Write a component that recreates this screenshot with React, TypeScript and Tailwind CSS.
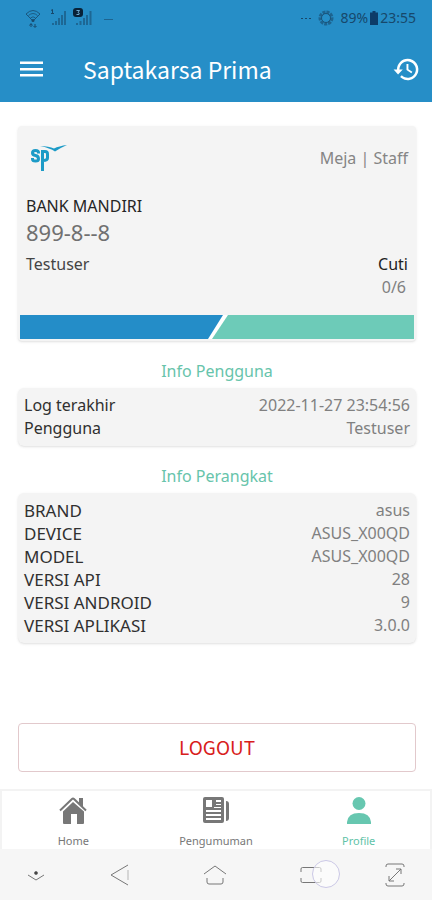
const account = [
  { label: 'Log terakhir', value: '2022-11-27 23:54:56' },
  { label: 'Pengguna', value: 'Testuser' },
];

const device = [
  { label: 'BRAND', value: 'asus' },
  { label: 'DEVICE', value: 'ASUS_X00QD' },
  { label: 'MODEL', value: 'ASUS_X00QD' },
  { label: 'VERSI API', value: '28' },
  { label: 'VERSI ANDROID', value: '9' },
  { label: 'VERSI APLIKASI', value: '3.0.0' },
];

function StatusBar() {
  return (
    <div className="flex h-9 items-center justify-between pl-6 pr-4 text-[#17486b]">
      <div className="flex items-center">
        <svg width="90" height="24" viewBox="0 0 90 24" fill="none" aria-hidden="true">
          <path d="M2 8Q9 1 16 8L9 15Z" stroke="currentColor" opacity=".8" />
          <path d="M4.500 9.500Q9 5.500 13.500 9.500M6.500 12Q9 9.500 11.500 12" stroke="currentColor" opacity=".7" />
          <path d="M7 21v-3M5.500 19.500l1.500-2 1.500 2M11 18v3M9.500 20l1.500 1.500 1.500-1.500" stroke="currentColor" />
          <circle cx="9" cy="14.500" r="1.500" fill="currentColor" />
          <path d="M27 4.500l1.500-1v4M27 7.500h3" stroke="currentColor" />
          <g fill="currentColor" opacity=".55">
            <path d="M28 17h2v2h-2zM31 15h2v4h-2zM34 12h2v7h-2zM37 9h2v10h-2zM40 5h2v14h-2z" />
            <path d="M52 17h2v2h-2zM55.500 15h2v4h-2zM59 12h2v7h-2zM62 9h2v10h-2zM65.500 5h2v14h-2z" />
          </g>
          <rect x="49" y="2" width="10" height="9" rx="3" fill="#082238" />
          <path d="M52.500 4.500h3l-1.500 2q2 .5 1 2h-2.500" stroke="#6ea9cf" />
          <path d="M80 13.500h9" stroke="currentColor" opacity=".6" />
        </svg>
      </div>
      <div className="flex items-center font-['Noto_Sans',sans-serif] text-sm">
        <svg className="mr-1.5" width="34" height="16" viewBox="0 0 34 16" fill="none" aria-hidden="true">
          <path d="M0 8.500h11" stroke="currentColor" strokeDasharray="2 2" />
          <circle cx="25" cy="8" r="6" stroke="currentColor" strokeWidth="3" strokeDasharray="3 1" opacity=".6" />
          <circle cx="25" cy="8" r="4.500" stroke="currentColor" opacity=".8" />
        </svg>
        <span>89%</span>
        <svg className="mx-0.5" width="8" height="14" viewBox="0 0 8 14" aria-hidden="true">
          <path d="M2.500 0h3v1.500H8V14H0V1.500h2.500z" fill="#0d3c68" />
        </svg>
        <span>23:55</span>
      </div>
    </div>
  );
}

function Header() {
  return (
    <header className="bg-[#268ec7]">
      <StatusBar />
      <div className="flex h-[66px] items-center pl-5 pr-3 text-white">
        <button type="button" aria-label="Menu" className="mr-10">
          <svg width="23" height="18" viewBox="0 0 23 18" fill="currentColor" aria-hidden="true">
            <path d="M0 1.500h23v2.500H0zM0 8h23v2.500H0zM0 14h23v2.500H0z" />
          </svg>
        </button>
        <h1 className="flex-1 font-['Noto_Sans_CJK_SC',sans-serif] text-[23px]">Saptakarsa Prima</h1>
        <button type="button" aria-label="Riwayat">
          <svg width="27" height="27" viewBox="0 0 24 24" fill="currentColor" aria-hidden="true">
            <path d="M13 2.500a9.500 9.500 0 0 0-9.500 9.500H.5l4 4.500 4.200-4.500H5.700a7.300 7.300 0 1 1 2.100 5.200l-1.500 1.500A9.500 9.500 0 1 0 13 2.500zm-1 4.500v5.500l4.300 2.900.9-1.400-3.500-2.300V7z" />
          </svg>
        </button>
      </div>
    </header>
  );
}

function Logo() {
  return (
    <svg width="42" height="32" viewBox="0 0 42 32" fill="none" aria-label="SP" role="img">
      <g stroke="#1c9bc7" strokeWidth="3">
        <path d="M12.500 11.500V10.500Q12.500 8.500 9.500 8.500T6.500 11Q6.500 13 9.500 13.500T12.500 17Q12.500 19 9.500 19T6.500 17V16" />
        <path d="M16.500 29V9.500h2.500Q21.500 9.500 21.500 12v4Q21.500 18.500 17 18.500" />
      </g>
      <path d="M14 4Q23 4 28 6.500Q33 4 41 3Q34 6 29 9.500Q24 6 14 4z" fill="#1c9bc7" />
    </svg>
  );
}

function InfoCard({ title, rows, labelClass }: { title: string; rows: { label: string; value: string }[]; labelClass: string }) {
  return (
    <section>
      <h2 className="mb-[5px] text-center text-base leading-6 text-[#67c4ab]">{title}</h2>
      <dl className="rounded-md bg-[#f4f4f4] px-1.5 py-1.5 text-base shadow">
        {rows.map((row) => (
          <div key={row.label} className="flex justify-between leading-[23px]">
            <dt className={labelClass}>{row.label}</dt>
            <dd className="text-[#808080]">{row.value}</dd>
          </div>
        ))}
      </dl>
    </section>
  );
}

function TabBar() {
  return (
    <nav className="grid grid-cols-3 border-x-2 border-t-2 border-[#f3f3f3] bg-white text-[11px] leading-4 text-[#777]">
      <a href="#home" className="flex h-[58px] flex-col items-center justify-between pt-1">
        <svg width="30" height="30" viewBox="0 0 30 30" fill="#777" aria-hidden="true">
          <path d="M15 7L26 16.500V28q0 1-1 1h-6V19h-6v10H6q-1 0-1-1V16.500z" />
          <path d="M2 15.500L14 4q1-1 2 0l12 11.500" fill="none" stroke="#777" strokeWidth="2" />
          <path d="M21 3h4v9l-4-4z" />
        </svg>
        Home
      </a>
      <a href="#pengumuman" className="flex h-[58px] flex-col items-center justify-between pt-1">
        <svg width="30" height="30" viewBox="0 0 30 30" aria-hidden="true">
          <rect x="2" y="2" width="21" height="26" rx="2" fill="#777" />
          <path d="M5 5h6v7H5zM15 5h5v2h-5zM15 9h5v1h-5zM13 12h7v1h-7zM5 15h15v2H5zM5 19h15v2H5zM5 23h15v2H5z" fill="#fff" />
          <path d="M25 6q3 0 3 3v14q0 3-3 3z" fill="#777" />
        </svg>
        Pengumuman
      </a>
      <a href="#profile" className="flex h-[58px] flex-col items-center justify-between pt-1 text-[#5fc3a8]">
        <svg width="30" height="30" viewBox="0 0 30 30" fill="#67c7b0" aria-hidden="true">
          <circle cx="15" cy="8.500" r="6.500" />
          <path d="M3 29v-2q1-9 12-9t12 9v2z" />
        </svg>
        Profile
      </a>
    </nav>
  );
}

function SystemBar() {
  return (
    <div className="grid h-[51px] grid-cols-[72px_1fr_1fr_1fr_73px] items-center justify-items-center bg-[#f6f6f6] text-[#777]">
      <button type="button" aria-label="Sembunyikan">
        <svg width="18" height="16" viewBox="0 0 18 16" fill="none" stroke="currentColor" aria-hidden="true">
          <path d="M1 8l8 5 8-5" />
          <circle cx="9" cy="6" r="1.500" fill="#333" />
        </svg>
      </button>
      <button type="button" aria-label="Kembali">
        <svg width="20" height="22" viewBox="0 0 20 22" fill="none" stroke="currentColor" aria-hidden="true">
          <path d="M18 1L1 11l17 10" />
          <path d="M18 6v10" opacity=".5" />
        </svg>
      </button>
      <button type="button" aria-label="Beranda">
        <svg width="24" height="22" viewBox="0 0 24 22" fill="none" stroke="currentColor" aria-hidden="true">
          <path d="M1 10L12 2l11 8M4 14v4q0 2 2 2h12q2 0 2-2v-4" />
        </svg>
      </button>
      <button type="button" aria-label="Aplikasi terbaru" className="relative">
        <svg width="22" height="18" viewBox="0 0 22 18" fill="none" stroke="currentColor" aria-hidden="true">
          <path d="M1 6V3q0-1.500 1.500-1.500h17Q21 1.500 21 3v3M1 12v3q0 1.500 1.500 1.500h17Q21 16.500 21 15v-3" />
        </svg>
        {/* touch marker */}
        <span className="absolute -top-1.5 left-3 size-7 rounded-full border border-[#cbc8e6] bg-white/60" />
      </button>
      <button type="button" aria-label="Layar penuh">
        <svg width="20" height="24" viewBox="0 0 20 24" fill="none" stroke="currentColor" aria-hidden="true">
          <path d="M1 4V3q0-2 2-2h14q2 0 2 2v1M1 20v1q0 2 2 2h14q2 0 2-2v-1M4 18L16 6M11 6h5v5M4 13v5h5" />
        </svg>
      </button>
    </div>
  );
}

export default function App() {
  return (
    <div className="flex min-h-screen flex-col bg-white font-['Noto_Sans',sans-serif]">
      <Header />
      <main className="flex flex-1 flex-col pl-[18px] pr-4 pt-6">
        {/* Member card */}
        <section className="rounded bg-[#f4f4f4] pb-0.5 shadow-sm">
          <div className="px-2 pt-4">
            <div className="flex items-start justify-between">
              <Logo />
              <p className="pt-1 text-base leading-6 text-[#858585]">Meja | Staff</p>
            </div>
            <h2 className="mt-5 text-base leading-6 text-[#252525]">BANK MANDIRI</h2>
            <p className="text-[22px] leading-7 text-[#707070]">899-8--8</p>
            <div className="mt-1.5 flex justify-between text-base leading-6">
              <p className="text-[#444]">Testuser</p>
              <p className="text-[#222]">Cuti</p>
            </div>
            <p className="pr-0.5 text-right text-base leading-[22px] text-[#808080]">0/6</p>
          </div>
          <svg className="mt-[17px] h-6 w-full px-0.5" viewBox="0 0 394 24" preserveAspectRatio="none" aria-hidden="true">
            <path d="M0 0h394v24H0z" fill="#fff" />
            <path d="M0 0h203l-15 24H0z" fill="#248dc8" />
            <path d="M208 0h186v24H192z" fill="#6dcbb8" />
          </svg>
        </section>

        <div className="mt-[18px] flex flex-col gap-[18px]">
          <InfoCard title="Info Pengguna" rows={account} labelClass="text-[#303030]" />
          <InfoCard title="Info Perangkat" rows={device} labelClass="text-[17px] text-[#303030]" />
        </div>

        <button
          type="button"
          className="mb-[17px] mt-auto h-[49px] rounded border border-[#e2c9cc] font-['Noto_Sans_CJK_SC',sans-serif] text-[19px] text-[#d8201c]"
        >
          LOGOUT
        </button>
      </main>
      <TabBar />
      <SystemBar />
    </div>
  );
}
